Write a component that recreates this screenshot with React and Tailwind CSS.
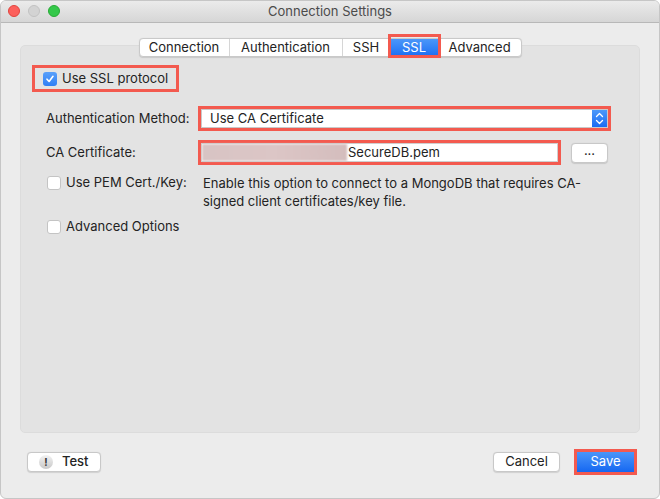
import React from 'react';

const tabs = [
  { name: 'Connection', w: 'w-[89px]' },
  { name: 'Authentication', w: 'w-[113px]' },
  { name: 'SSH', w: 'w-[48px]' },
  { name: 'SSL', w: 'w-[49px]', active: true },
  { name: 'Advanced', w: 'w-[82px]' },
];

function Box({ checked }) {
  if (checked) {
    return (
      <span className="w-[14px] h-[14px] rounded-[3px] bg-gradient-to-b from-[#5aa0fa] to-[#2f7ff5] flex items-center justify-center shrink-0">
        <svg width="10" height="10" viewBox="0 0 10 10">
          <path d="M2 5.2 L4.1 7.5 L8 2.3" fill="none" stroke="white" strokeWidth="1.6" strokeLinecap="round" strokeLinejoin="round" />
        </svg>
      </span>
    );
  }
  return <span className="w-[14px] h-[14px] rounded-[3px] bg-white border border-[#c4c4c4] shrink-0" />;
}

export default function App() {
  return (
    <div className="w-[660px] h-[499px] bg-white font-['Inter',sans-serif] text-[13px] text-[#232323]">
      <div className="w-full h-full flex flex-col bg-[#ececec] rounded-[6px] overflow-hidden border border-[#c6c6c6]">
        {/* title bar */}
        <div className="h-[22px] shrink-0 relative flex items-center justify-center bg-gradient-to-b from-[#ebebeb] to-[#d6d6d6] border-b border-[#b8b8b8]">
          <div className="absolute left-[7px] top-[4px] flex gap-[8px]">
            <span className="w-[12px] h-[12px] rounded-full bg-[#fc605c] border border-[#e0443e]" />
            <span className="w-[12px] h-[12px] rounded-full bg-[#d3d3d3] border border-[#c2c2c2]" />
            <span className="w-[12px] h-[12px] rounded-full bg-[#34c84a] border border-[#27aa35]" />
          </div>
          <span className="text-[#4b4b4b]">Connection Settings</span>
        </div>

        {/* tabs */}
        <div className="pt-[15px] flex justify-center relative z-10">
          <div className="flex h-[19px] bg-white border border-[#c9c9c9] rounded-[4px] shadow-[0_0.5px_1px_rgba(0,0,0,0.12)]">
            {tabs.map((t, i) => (
              <div
                key={t.name}
                className={
                  t.active
                    ? `${t.w} relative flex items-center justify-center text-white bg-gradient-to-b from-[#4b97f9] to-[#1c6ff3]`
                    : `${t.w} flex items-center justify-center ${i > 0 && !tabs[i - 1].active ? 'border-l border-[#d6d6d6]' : ''}`
                }
              >
                {t.name}
                {t.active && (
                  <span className="absolute -left-[2px] -right-[2px] -top-[5px] -bottom-[2px] border-[3px] border-[#f35a4f]" />
                )}
              </div>
            ))}
          </div>
        </div>

        {/* panel */}
        <div className="mx-[19px] -mt-[12px] h-[388px] bg-[#e3e3e3] rounded-[5px] border border-[#dcdcdc] pt-[19px]">
          <div className="ml-[11px] w-[147px] h-[27px] border-[3px] border-[#f35a4f] flex items-center gap-[5px] pl-[8px]">
            <Box checked />
            <span>Use SSL protocol</span>
          </div>

          <div className="mt-[14px] flex items-center">
            <span className="w-[177px] pl-[25px] shrink-0">Authentication Method:</span>
            <div className="w-[413px] h-[25px] border-[3px] border-[#f35a4f] flex">
              <div className="flex-1 flex bg-white border border-[#c9c9c9]">
                <span className="flex-1 pl-[8px] leading-[17px]">Use CA Certificate</span>
                <span className="w-[15px] flex items-center justify-center bg-gradient-to-b from-[#4c98fa] to-[#1a6cf2]">
                  <svg width="9" height="13" viewBox="0 0 9 13">
                    <path d="M1.5 4.5 L4.5 1.5 L7.5 4.5 M1.5 8.5 L4.5 11.5 L7.5 8.5" fill="none" stroke="white" strokeWidth="1.3" strokeLinecap="round" strokeLinejoin="round" />
                  </svg>
                </span>
              </div>
            </div>
          </div>

          <div className="mt-[9px] flex items-center">
            <span className="w-[177px] pl-[25px] shrink-0">CA Certificate:</span>
            <div className="w-[363px] h-[25px] border-[3px] border-[#f35a4f] flex">
              <div className="flex-1 flex items-center bg-white border border-[#cfcfcf]">
                <span className="w-[145px] h-full bg-gradient-to-r from-[#d8c4c4] via-[#dcc6c6] to-[#d4bdbd] blur-[1px]" />
                <span className="pl-[1px]">SecureDB.pem</span>
              </div>
            </div>
            <button className="ml-[10px] w-[37px] h-[20px] bg-white border border-[#c8c8c8] rounded-[4px] shadow-[0_0.5px_1px_rgba(0,0,0,0.12)] flex items-center justify-center leading-none pb-[4px]">
              ...
            </button>
          </div>

          <div className="mt-[9px] flex items-start">
            <div className="w-[182px] h-[18px] pl-[26px] shrink-0 flex items-center gap-[5px] whitespace-nowrap">
              <Box />
              <span>Use PEM Cert./Key:</span>
            </div>
            <p className="leading-[18px] w-[420px]">
              Enable this option to connect to a MongoDB that requires CA-
              <br />
              signed client certificates/key file.
            </p>
          </div>

          <div className="mt-[7px] pl-[26px] flex items-center gap-[5px]">
            <Box />
            <span>Advanced Options</span>
          </div>
        </div>

        {/* footer */}
        <div className="mt-[16px] pl-[26px] pr-[22px] flex items-center">
          <button className="w-[74px] h-[20px] bg-white border border-[#c8c8c8] rounded-[4px] shadow-[0_0.5px_1px_rgba(0,0,0,0.12)] flex items-center pl-[11px] gap-[9px]">
            <span className="w-[14px] h-[14px] rounded-full bg-gradient-to-b from-[#f2f2f2] to-[#c9c9c9] flex items-center justify-center text-[10px] font-bold text-[#333]">
              !
            </span>
            <span className="font-medium">Test</span>
          </button>
          <div className="flex-1" />
          <button className="w-[67px] h-[20px] bg-white border border-[#c8c8c8] rounded-[4px] shadow-[0_0.5px_1px_rgba(0,0,0,0.12)] flex items-center justify-center">
            Cancel
          </button>
          <div className="ml-[14px] w-[63px] h-[26px] border-[3px] border-[#f35a4f] flex">
            <button className="flex-1 bg-gradient-to-b from-[#4a95f9] to-[#1467f1] text-white flex items-center justify-center">
              Save
            </button>
          </div>
        </div>
      </div>
    </div>
  );
}
